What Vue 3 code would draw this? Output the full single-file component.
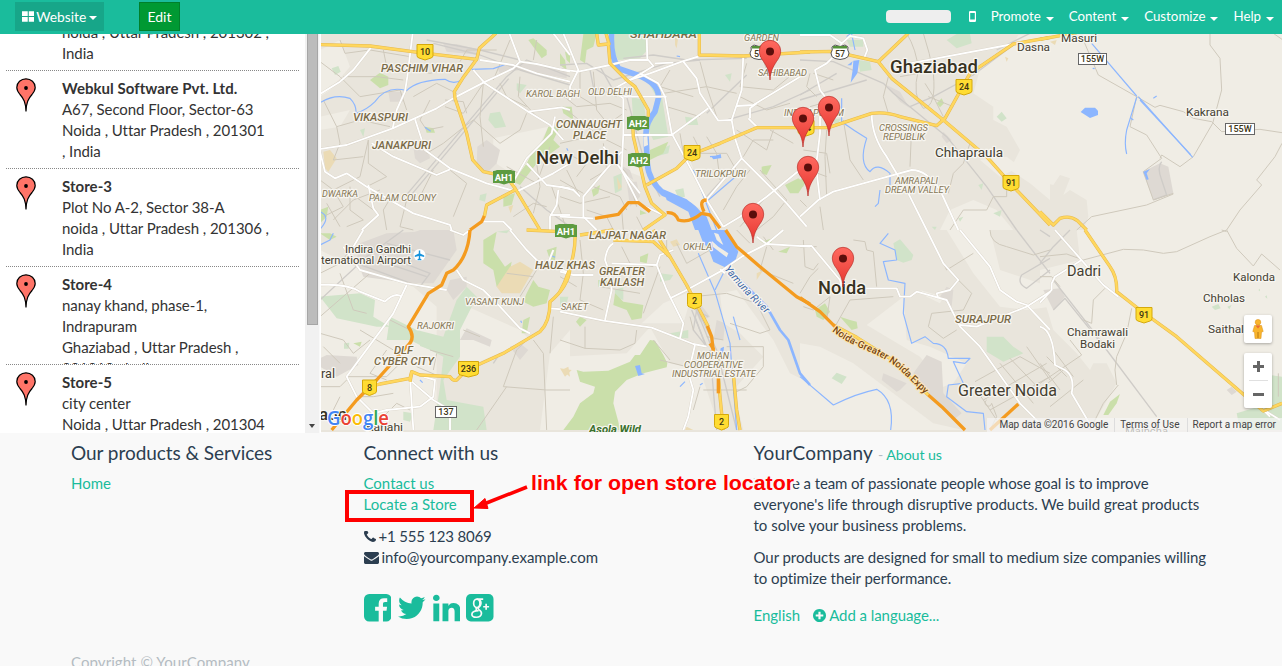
<script setup>
const menus = ['Promote', 'Content', 'Customize', 'Help']

const stores = [
  { name: 'Store-1', lines: ['Sector 62', 'noida , Uttar Pradesh , 201302 ,', 'India'] },
  { name: 'Webkul Software Pvt. Ltd.', lines: ['A67, Second Floor, Sector-63', 'Noida , Uttar Pradesh , 201301', ', India'] },
  { name: 'Store-3', lines: ['Plot No A-2, Sector 38-A', 'noida , Uttar Pradesh , 201306 ,', 'India'] },
  { name: 'Store-4', lines: ['nanay khand, phase-1,', 'Indrapuram', 'Ghaziabad , Uttar Pradesh ,', '201010 , India'] },
  { name: 'Store-5', lines: ['city center', 'Noida , Uttar Pradesh , 201304'] },
]

// Each map tile keeps its own local coordinates at three units per pixel.
const tiles = [
  {
    x: 320, y: 30,
    rural: ['M0 60L60 30 90 110 30 180 0 200Z', 'M520 325L640 300 685 290 640 380 590 440 520 395Z', 'M0 260L90 240 60 290 0 300Z'],
    built: ['M472 350L500 330 540 360 530 400 500 430 470 410Z', 'M205 185L245 185 250 215 210 215Z', 'M280 350L325 355 330 385 300 400 285 385Z', 'M370 42L410 42 480 60 480 75 380 65Z', 'M530 110L640 95 740 120 740 145 600 120 540 130Z'],
    mint: ['M35 115L55 108 62 125 45 135Z', 'M510 250L540 245 558 290 525 295 505 270Z', 'M590 160L620 165 600 190 590 180Z', 'M480 495L500 490 495 515 478 510Z', 'M120 300L135 295 130 320Z'],
    green: ['M150 150L180 128 205 140 205 165 180 175Z', 'M625 30L640 25 680 60 680 75 665 85Z', 'M685 290L720 290 700 330 720 350 650 400 600 465 580 455 620 400 635 370 665 340Z', 'M550 500L585 490 575 525 550 530Z', 'M735 65L750 70 750 100 740 90Z', 'M315 290L340 295 345 308 320 308Z', 'M0 540L25 530 20 560 0 580Z'],
    sand: ['M10 365L30 360 50 385 25 425 15 415Z', 'M565 530L580 525 572 550Z'],
    rail: ['M255 500L560 140 620 90 750 140', 'M265 505L566 146', 'M320 30L480 60 600 90', 'M340 40L480 75 600 120 750 165', 'M600 470L680 540 750 590'],
    minor: ['M0 95L60 140 120 200 240 180 260 240', 'M60 30L75 70 150 60 270 80', 'M190 60L200 110 260 120', 'M70 140L170 140 250 150', 'M10 210L50 290 120 270 210 290', 'M50 290L60 340 40 390 130 380', 'M145 330L145 400 200 440 140 470', 'M330 210L300 270 320 300 370 290', 'M280 120L330 130 410 110', 'M280 200L350 160 410 190', 'M420 300L370 340 320 370', 'M420 300L460 270 540 340 600 300 620 250', 'M490 160L480 260 490 350', 'M490 160L430 250 375 230', 'M375 210L430 215 440 250', 'M420 95L440 60 530 60', 'M600 140L595 200 650 260', 'M650 30L640 90', 'M540 160L560 200 620 230', 'M690 350L650 460 560 410', 'M650 400L660 470 640 550', 'M0 450L40 480 70 530 10 560', 'M90 470L90 540 130 570 80 590', 'M40 480L120 440 145 330', 'M220 490L190 540 200 600', 'M260 510L240 590 280 600', 'M10 490L80 480 160 540', 'M390 420L440 460 400 560', 'M340 420L300 500', 'M570 30L520 150', 'M680 530L640 520 580 560', 'M695 470L720 540 740 600', 'M40 570L100 510 180 480', 'M20 520L60 590'],
    water: ['M0 218Q45 190 90 205Q110 225 108 250Q140 240 165 215Q200 165 260 182Q290 150 375 148Q400 165 425 150', 'M455 118L520 116 560 102', 'M0 545Q35 560 0 598', 'M315 292L332 304'],
    white: ['M278 10L262 140 255 185 230 240 218 295', 'M155 50L100 120 60 155 0 192', 'M0 357L80 345 218 295 350 235 405 202 490 158 580 115 600 95 568 10', 'M480 90L580 105 650 130 750 155', 'M460 120L495 160 625 245 690 285 730 330', 'M700 10L750 75', 'M600 95L650 102 750 125', 'M625 245L725 232 750 240', 'M285 268L315 360 390 415 500 460 590 485', 'M155 340L220 380 350 435 390 418', 'M590 485L700 430 750 400', 'M590 485L580 455 620 385 695 310 705 260', 'M620 400L680 465 750 475', 'M0 365L15 425 45 445 80 430 140 470 280 550 390 585 395 600', 'M145 465L160 535 175 555 125 600', 'M715 480L710 525 690 560 690 600', 'M690 555L750 555', 'M490 575L550 575 575 600'],
    yellow: ['M0 44L150 48 300 68 470 88 478 55 528 10', 'M470 88L428 145 403 185 405 205 440 310 458 390 490 425 560 440 585 475 660 600', 'M585 480L500 525 493 560'],
    orange: ['M493 558L485 575 450 600'],
  },
  {
    x: 560, y: 30,
    rural: ['M275 460L390 390 430 500 430 540 370 510Z', 'M205 425L235 350 245 440Z'],
    built: ['M200 455L230 455 240 500 210 530Z', 'M180 405L210 420 220 450 190 430Z'],
    mint: ['M165 10H260L262 60 240 85 175 90 158 60Z', 'M250 135L305 195 325 320 280 330 260 290 290 200Z', 'M215 200L250 210 260 280 220 280Z', 'M160 440L185 430 185 480 165 490Z', 'M375 260L410 265 415 285 380 285Z', 'M345 480L370 475 375 500 355 505Z', 'M495 135L515 130 510 155Z', 'M300 360L330 345 325 370 285 380Z'],
    green: ['M70 12L110 10 100 50 80 60 75 100 60 90Z', 'M0 70L15 90 20 120 0 105Z', 'M95 480L120 465 115 490 100 500Z', 'M270 360L325 335 310 370 270 390Z', 'M675 465L715 445 735 460 715 490 690 490Z', 'M605 410L635 405 620 435 605 430Z', 'M5 230L35 230 40 270 10 250Z', 'M240 540L260 550 240 555Z'],
    sand: ['M345 20L355 20 350 55 345 45Z', 'M170 440L185 470 175 480Z'],
    rail: ['M190 85L280 75 380 90 560 85', 'M0 105L80 100 160 150 320 100 420 90', 'M440 250L560 135', 'M500 270L640 230 750 180', 'M540 390L440 500', 'M200 200L260 420 300 500', 'M90 120L100 170 170 200', 'M120 110L165 190'],
    minor: ['M0 190L50 230 150 220 200 240', 'M20 240L120 320 200 360', 'M0 340L90 320 190 250', 'M60 120L60 200 110 230', 'M100 125L110 240 150 290', 'M310 190L440 170 530 190', 'M330 120L300 170 400 200', 'M420 95L440 170 470 260', 'M560 100L540 170 640 180 700 130', 'M600 60L620 120', 'M320 230L420 260', 'M360 310L370 370 500 370 540 440', 'M440 320L470 370 480 450', 'M530 300L620 360 640 300', 'M550 380L580 330 640 330', 'M400 320L420 360', 'M600 420L680 510 640 560 590 600', 'M570 420L530 470 490 540', 'M610 510L540 590', 'M130 340L140 420 90 450', 'M40 380L80 400 50 440', 'M150 370L200 430 230 530', 'M100 470L180 500 200 540', 'M80 540L140 560 160 600', 'M185 540L190 600', 'M230 560L250 600', 'M540 200L620 240 690 220', 'M20 420L60 500', 'M0 450L70 490', 'M0 500L60 520 150 500', 'M630 300L700 340'],
    water: ['M550 420L445 510', 'M450 380L482 378', 'M350 78L360 80', 'M20 355L24 362', 'M400 420L470 600'],
    river: ['M155 10Q150 75 175 115L240 138Q300 165 295 205L285 245Q255 280 258 320L262 400Q265 450 310 490L380 520Q425 545 430 600'],
    waterArea: ['M310 478L380 508 440 560 455 600H405L385 545 320 510Z', 'M455 382L482 372 484 384 460 388Z'],
    islands: ['M250 320L262 318 264 345 252 350Z'],
    white: ['M0 118L55 125 150 105 210 90 265 90 280 108 245 130 155 180 190 205', 'M260 10L262 90', 'M10 10L55 120 30 170 30 210', 'M210 150L270 130 365 95 420 78', 'M285 100L340 98', 'M240 130L295 160 315 200 335 310 400 430 440 510 490 590', 'M190 205V310L185 420 235 520 310 555', 'M190 200L320 200', 'M190 315L335 315 445 235', 'M370 95L410 145 420 190 475 272 515 270 525 325 545 385 680 520 740 590', 'M550 75L545 180 515 270', 'M530 228L580 225 720 140', 'M570 265L570 235 590 220', 'M590 290L565 265', 'M110 600L70 560 70 500 120 440 185 365', 'M0 470L40 480 60 500', 'M130 350L240 490', 'M545 385L430 520', 'M490 590L540 560 620 500 750 395', 'M0 560L100 565'],
    yellow: ['M110 10L115 45 145 42 150 100 200 150 225 170 265 240 265 260', 'M138 10L148 45', 'M218 280L220 320 255 470 275 520 315 555 250 600', 'M260 465L350 415 390 375 480 340 590 293 750 293', 'M418 10V75L550 78 750 66'],
    orange: ['M105 565L175 553 205 518 235 518 270 545', 'M320 548Q345 545 355 570Q390 580 425 550L450 555 480 595', 'M440 510Q415 510 432 545'],
  },
  {
    x: 800, y: 30,
    rural: ['M750 10L655 15 635 50 545 100 520 190 580 230 580 270 620 290 660 360 630 420 690 460 750 510Z', 'M450 540L520 510 590 540 640 600H420Z', 'M600 440L540 390 620 380 660 410Z'],
    built: ['M260 165L300 185 320 220 330 235 300 215Z', 'M430 305L455 330 440 340 425 320Z'],
    mint: ['M440 30L470 12 510 12 515 40 470 55Z', 'M175 90L210 95 215 120 180 125Z', 'M590 260L605 245 620 265 605 275Z', 'M140 30L190 30 190 50 150 50Z', 'M95 270L125 265 110 285Z', 'M580 550L605 540 600 560Z', 'M535 465L550 460 545 480Z', 'M475 565L490 560 480 575Z', 'M395 590L410 590 405 600Z'],
    green: ['M410 220L425 205 432 220 420 232Z', 'M0 450L15 440 10 470 0 470Z'],
    sand: ['M615 80L625 85 620 95Z'],
    rail: ['M0 90L100 95 250 160 280 190 440 320 560 470 650 600', 'M640 45L520 135 400 200 330 230', 'M200 150L0 210', 'M110 130L0 195', 'M690 10L590 60'],
    minor: ['M320 10Q350 60 355 120Q335 200 370 235Q410 230 400 130Q390 70 370 10', 'M265 140L250 200 265 250', 'M375 160L400 200 430 260', 'M385 200L460 230', 'M355 130L300 140', 'M130 270L150 390 190 450', 'M335 290L330 410', 'M80 300L75 380 80 500', 'M10 360L80 370 90 430', 'M0 410L80 440', 'M510 340L490 400 460 430 445 490', 'M450 600L490 540 560 540 580 500 620 500 620 480', 'M30 130L20 170 50 200', 'M30 230L65 220 75 260', 'M0 510L20 530', 'M60 530L70 600', 'M40 130L100 150'],
    water: ['M155 12L165 60', 'M125 205L125 275Q160 300 200 325Q175 400 210 425Q230 395 270 430L270 465', 'M240 480L235 520 225 530', 'M140 20L150 12'],
    waterArea: ['M160 92L178 90 172 130 152 158 158 120Z', 'M142 106L158 94 154 106Z'],
    white: ['M0 15L90 15 125 40 150 18 190 25 202 60 190 90', 'M125 40L110 70 80 100 45 120 60 180 75 200 60 240 60 310 48 410 60 510', 'M330 100L640 42', 'M215 250Q215 320 260 380L325 490 380 600', 'M0 560L55 510 100 485 190 460 335 420 Q380 420 420 480L475 600'],
    yellow: ['M0 66L100 64 235 95 325 10', 'M235 95L275 145 430 270 560 380 640 470 750 585', 'M0 293H85L215 250Q260 245 300 260L410 287 435 265 510 130 640 42 750 22'],
    orange: [],
  },
  {
    x: 1040, y: 0,
    rural: ['M0 100H726V690H130L145 650 140 600 90 570 70 585 90 535 60 525 40 555 0 545Z'],
    built: ['M308 515L360 490 385 500 400 580 340 600 325 560Z'],
    mint: [], green: [], sand: ['M30 125L50 120 45 135Z'],
    rail: ['M365 485Q350 500 365 540L380 585 340 600'],
    minor: ['M510 100V135L540 175 545 270 518 370 460 470 420 500 365 465 360 475', 'M130 120L175 225 290 290 270 380 320 405 365 475 310 515 340 600 400 580', 'M290 290L345 322 360 316 430 335 460 355 515 365 545 395 660 388 726 398', 'M110 690L155 650 320 615 400 582', 'M560 690L600 630 665 555 650 540 705 470 726 430', 'M700 100L726 118'],
    water: ['M155 130L290 288', 'M295 290L458 472', 'M300 300L452 464', 'M290 292L260 390Q252 430 260 462', 'M272 354L280 360', 'M340 295L350 288', 'M158 205L164 206'],
    waterArea: ['M122 336L135 323H165L174 332V345L150 354Z', 'M310 515L330 507 320 520 326 538 320 540Z'],
    white: [],
    yellow: ['M0 118L110 98', 'M0 635L40 675 60 655 Q90 645 112 662L140 690'],
    orange: [],
  },
  {
    x: 320, y: 230,
    rural: ['M0 60L80 100 280 170 350 230 350 600H0Z', 'M420 220L600 300 630 330 420 420Z', 'M690 370L750 300 750 600H660Z'],
    built: ['M120 40L200 10 400 0 410 60 340 160 270 160 130 140 110 90Z', 'M390 150L440 140 440 170 400 210 380 180Z', 'M0 385L20 375 110 380 115 405 50 440 0 410Z', 'M440 295L515 330 510 350 460 330 420 330Z', 'M570 350L600 340 625 360 600 390Z', 'M200 40L300 0 390 0 380 60 300 140 260 140Z'],
    mint: ['M0 200L120 190 165 210 160 260 210 290 170 290 50 265Z', 'M210 260L290 300 370 320 410 210 440 170 470 200 440 260 420 300 420 380 370 450 380 510 490 530 500 600H340L360 470 370 380 270 330 200 330Z', 'M300 340L328 350 325 357 300 348Z', 'M72 340L88 338 86 356 72 356Z', 'M530 5L570 0 560 10Z', 'M250 545L280 550 270 575 250 570Z'],
    green: ['M490 30L530 5 520 60 555 110 575 95 560 180 530 170 520 120 490 100Z', 'M655 170L690 180 680 220 640 230 610 215 620 190 640 150Z', 'M610 270L630 260 620 310 605 310Z', 'M680 60L710 50 705 90 690 90Z', 'M0 10L30 10 50 20 30 30Z', 'M100 340L125 335 120 350Z'],
    sand: ['M570 110L600 95 640 120 600 190 545 190 530 170Z', 'M725 420L745 410 750 440Z'],
    rail: ['M0 210L140 80 250 0', 'M520 400L540 370', 'M110 100L300 170 330 130 200 80', 'M170 90L320 140', 'M200 40L390 90'],
    minor: ['M60 130L100 240 140 250', 'M0 260L150 130', 'M0 310L70 330 100 370 150 330', 'M210 270L270 300', 'M120 300L220 360', 'M80 440L200 440 240 400', 'M0 470L60 470 80 450', 'M220 490L160 500 110 500', 'M190 560L230 520 270 540', 'M550 470L590 360 620 330', 'M550 470L680 480 750 480', 'M640 330L670 370 680 600', 'M470 600L560 470', 'M350 370L340 420', 'M430 300L480 320', 'M600 200L650 120 680 90', 'M560 130L640 140', 'M700 260L690 370', 'M120 20L60 100 0 130', 'M10 350L60 400', 'M60 500L30 560', 'M200 360L150 430 200 450', 'M290 410L360 440', 'M330 360L400 380'],
    water: ['M0 45L30 30 40 10', 'M690 75L705 82', 'M605 278L602 272', 'M300 450L308 458'],
    white: ['M0 165Q80 160 120 185L195 215Q225 185 245 200', 'M70 50L120 120 260 160 380 180', 'M390 0L430 15 450 0', 'M410 120L430 150 490 180 540 230 600 295 630 310', 'M570 0L620 60 650 90 750 130', 'M700 60L680 110', 'M260 165L220 250 80 440 110 500 160 550 200 540 300 530 340 500 345 450 310 440', 'M270 440L280 600', 'M275 455L340 510 390 540 390 600', 'M690 235L750 240', 'M130 0L100 50'],
    yellow: ['M150 470L180 462 270 445 275 425 300 435 390 440 Q400 455 410 450L440 420 550 370 660 305Q690 275 690 215Q745 170 750 115', 'M270 455L275 430', 'M620 0L720 5'],
    orange: ['M450 0Q445 80 400 120L380 130 365 165 325 190 265 290Q290 325 260 350L170 450 110 510 35 600'],
  },
  {
    x: 560, y: 230,
    rural: ['M245 280L310 220 400 180 370 280Z', 'M480 190L530 180 610 290 640 330 690 430 750 460V600H550L520 480 610 380 540 310 490 280Z', 'M0 380L200 370 270 290 330 400 420 420 480 600H0Z'],
    built: ['M470 270L495 280 490 330 460 330Z', 'M420 220L450 260 420 275 405 240Z'],
    mint: ['M330 310L385 300 385 325 350 325Z', 'M300 130L340 135 330 150 300 155Z', 'M0 200L25 200 15 240 0 240Z', 'M165 180L190 170 190 210 165 200Z'],
    green: ['M165 190L190 215 250 225 245 265 215 270 200 240 160 225Z', 'M50 420L70 425 145 422 210 395 225 375 240 375 270 330 285 332 310 375 322 400 320 412 250 430 200 450 165 485 160 520 175 575 180 600H10L40 560 60 520 100 490 105 470 60 455Z', 'M60 260L80 270 60 290 48 275Z', 'M115 150L140 150 140 170 115 170Z', 'M240 80L265 70 260 100 240 95Z', 'M655 65L690 50 680 70Z', 'M600 35L640 25 630 45Z'],
    sand: ['M0 415L35 420 15 440Z', 'M330 35L350 28 360 45 340 50Z', 'M590 130L610 120 590 150Z', 'M380 590L400 600H375Z'],
    rail: ['M320 60L380 170 430 290 450 340', 'M370 150L470 360 530 600', 'M395 240L440 350', 'M410 240L400 300 440 350', 'M405 260L438 350', 'M415 240L450 310', 'M425 250L445 260', 'M450 360L470 600'],
    minor: ['M0 330L75 355 180 360 225 340 230 300', 'M75 290V355', 'M60 30L70 130', 'M185 50L210 100 280 110', 'M250 250L300 110', 'M350 40L380 100 450 60', 'M320 30L320 80', 'M400 200L500 190 590 220 630 300 600 310 510 280', 'M500 350L610 350 610 410 560 470 520 490', 'M390 260L400 300', 'M300 390L380 410', 'M420 470L400 540', 'M430 480L560 480', 'M440 320L490 330', 'M620 50L600 120 700 160', 'M280 330L330 390', 'M120 170L240 190', 'M70 130L60 210 130 240', 'M570 40L530 0', 'M640 60L610 20', 'M0 140L50 170'],
    water: ['M415 70L465 185 510 340 530 600', 'M540 330L520 260', 'M360 470L375 455', 'M420 465L428 460', 'M490 130L465 180'],
    waterArea: ['M415 0L430 40 445 55 460 95 495 112 525 95 535 65 520 35 495 0Z', 'M225 408L240 405 245 430 255 432 235 438Z', 'M482 355L492 350 490 370 480 368Z'],
    islands: ['M462 8L475 12 490 45 482 40 470 30Z', 'M455 32L475 50 505 70 500 82 478 65 458 50Z'],
    river: [],
    channel: ['M500 110L620 230 660 300 685 330 720 430 750 465'],
    white: ['M160 40Q140 50 135 90L150 130 155 180 135 270', 'M0 245L130 272 275 293 400 342 440 350', 'M155 100L290 105 320 180 370 280 360 325', 'M290 105L300 75 340 60', 'M330 205L380 180 480 125 545 80 620 42 670 0', 'M480 118L495 130', 'M620 42L750 50', 'M590 20L620 42', 'M405 345L385 430 400 480 385 560 370 600', 'M0 125L40 135 100 135'],
    yellow: ['M45 0Q50 90 0 185', 'M60 15L160 0', 'M160 30L280 35 330 80 380 165 445 290', 'M280 0L330 80', 'M470 370L480 500 490 600', 'M480 400L520 430 530 540 540 600'],
    orange: ['M442 288L455 320 460 365', 'M475 445V490', 'M450 340L462 360', 'M497 0L530 50 600 110 710 200 750 222'],
  },
  {
    x: 800, y: 230,
    rural: ['M0 340L60 350 160 400 400 580 490 600H0Z', 'M200 285L310 200 320 330 390 350 500 400 460 460 430 470 360 380Z', 'M440 0H570L600 120 750 170 750 230 680 240 600 230 520 130Z', 'M360 180L430 200 420 220 380 200Z'],
    built: ['M340 430L380 375 425 395 430 490 485 550 460 570 380 490Z', 'M250 430L320 460 300 480 290 485 245 450Z', 'M440 170L460 180 455 230 420 200Z'],
    mint: ['M560 320L610 320 640 350 670 370 610 395 560 365Z', 'M280 40L300 28 340 75 335 90 310 98 290 90Z', 'M95 445L110 428 140 440 125 462Z'],
    green: ['M45 240L75 220 90 245 70 270 50 260Z', 'M120 260L150 270 170 275 173 295 155 300Z'],
    sand: ['M160 320L180 325 170 345Z'],
    rail: ['M650 0L750 130', 'M750 85L665 135Q650 160 680 175L750 120'],
    minor: ['M160 30L195 35 200 60 220 65 230 170', 'M105 290L150 210 280 200', 'M10 30L15 110 40 120 55 100', 'M0 190L30 140 55 115', 'M520 70L440 120 430 100', 'M470 145L515 190 490 240 395 250 385 290 430 325 470 300', 'M525 455L660 380 750 430', 'M550 510L740 400', 'M570 540L750 440', 'M600 400L700 520', 'M630 385L740 500', 'M680 350L750 450', 'M520 470L550 510 590 570', 'M560 510A10 10 0 1 0 575 520L590 560 570 600', 'M570 0Q570 40 620 50L700 75 750 60', 'M0 50L50 50', 'M10 230L40 240 90 200 80 270'],
    water: ['M0 440L100 525Q170 490 230 478Q285 510 272 600', 'M265 10L240 40 285 60 290 90 250 95 265 150 315 160 310 250 335 340 375 320 400 340Q440 340 445 385L510 385 495 400 460 395 490 460 445 465 440 500 500 545 550 550 555 600'],
    white: ['M380 0L430 100 475 150 450 180 410 190 415 205', 'M0 48L35 48 120 150 125 175 290 175 300 200 330 200 350 185 440 210 480 290 540 350 660 520 720 580', 'M480 0L570 110 600 180 650 215 680 225 750 300', 'M480 285L530 290 680 230 750 185'],
    yellow: ['M100 285L170 322 270 385 385 495'],
    orange: ['M0 203L60 245 105 290', 'M385 495L425 530 495 600', 'M570 600L655 522'],
  },
  {
    x: 1040, y: 230,
    rural: ['M110 0H726V600H150L230 460 200 400 160 400 150 420 110 370 40 300 10 200 0 190V120L120 90Z'],
    built: ['M10 180L60 175 75 200 40 240Z', 'M560 480L575 470 590 485 575 495Z'],
    mint: ['M590 550L690 520 690 435 726 440V600H600Z', 'M515 230L535 222 542 235 525 240Z', 'M562 230L575 225 568 238Z', 'M675 200L680 196 682 206Z', 'M655 180L660 176 660 184Z'],
    green: ['M190 555L210 515 240 492 230 520 205 555Z'],
    sand: [],
    rail: ['M0 100L40 50 90 0', 'M40 240L75 205 200 360 350 560', 'M40 150L200 355', 'M0 0L30 20'],
    minor: ['M0 80L80 72 130 90 250 58 310 60 370 70 410 65 510 20 560 0 590 55 640 108 665 72 720 120', 'M545 0L560 5', 'M195 175L160 210 155 280 130 270', 'M275 235L260 310 230 380 225 420 230 465', 'M0 140L35 140 60 170', 'M90 330L125 375 0 460', 'M0 400L60 480', 'M20 380L80 440', 'M40 360L100 440', 'M0 480L70 420', 'M30 530L130 450', 'M150 600L190 520 235 465', 'M715 430V500'],
    water: [],
    white: ['M45 0L120 85 190 165 235 200', 'M125 90L45 140 35 160 35 180 0 218', 'M0 290Q40 300 45 405L75 420Q105 440 95 490L160 600', 'M680 545L720 570', 'M660 530L690 560'],
    yellow: ['M135 0L210 110Q232 140 230 185L300 240 410 320 610 493 670 543 726 520'],
    orange: [],
  },
]

// Paint order: fills first, then roads from the narrowest up.
const layers = [
  { key: 'rural', passes: ['fill-rural'] },
  { key: 'built', passes: ['fill-built'] },
  { key: 'mint', passes: ['fill-mint'] },
  { key: 'green', passes: ['fill-green'] },
  { key: 'sand', passes: ['fill-sand'] },
  { key: 'rail', passes: ['rail'] },
  { key: 'minor', passes: ['minor'] },
  { key: 'water', passes: ['water'] },
  { key: 'channel', passes: ['channel'] },
  { key: 'river', passes: ['river'] },
  { key: 'waterArea', passes: ['fill-water'] },
  { key: 'islands', passes: ['fill-island'] },
  { key: 'white', passes: ['white-case', 'white'] },
  { key: 'yellow', passes: ['yellow-case', 'yellow'] },
  { key: 'orange', passes: ['orange'] },
]
const passes = layers.flatMap((l) => l.passes.map((cls) => ({ key: l.key, cls })))

// text, left, baseline, width, font size, class
const labels = [
  ['PASCHIM VIHAR', 381, 72, 82, 11.5, 'area'], ['VIKASPURI', 353, 121, 55, 11.5, 'area'],
  ['JANAKPURI', 372, 149, 59, 11.5, 'area'], ['DWARKA', 322, 197, 36, 9.5, 'small'],
  ['PALAM COLONY', 369, 201, 67, 9.5, 'small'], ['KAROL BAGH', 526, 97, 54, 9.5, 'small'],
  ['OLD DELHI', 588, 94.5, 44, 9.5, 'small'], ['CONNAUGHT', 556, 128, 66, 11, 'area'],
  ['PLACE', 573, 139, 33, 11, 'area'], ['New Delhi', 536, 164, 83, 18, 'city'],
  ['SHAHDARA', 630, 38, 67, 11.5, 'area'], ['GARDEN', 744, 41, 35, 9.5, 'small'],
  ['SAHIBABAD', 758, 76, 49, 9, 'small'], ['TRILOKPURI', 695, 177, 51, 9.5, 'small'],
  ['INDIRAPURAM', 784, 116, 60, 9.5, 'small'], ['Ghaziabad', 890, 73, 88, 18, 'city'],
  ['Dasna', 1017, 51, 33, 11.5, 'town'], ['Masuri', 1061, 42, 36, 11.5, 'town'],
  ['Kakrana', 1186, 116, 43, 11.5, 'town'], ['CROSSINGS', 879, 131, 49, 9.5, 'small'],
  ['REPUBLIK', 883, 140, 42, 9.5, 'small'], ['Chhapraula', 935, 157, 68, 12.5, 'town'],
  ['AMRAPALI', 895, 184, 43, 9.5, 'small'], ['DREAM VALLEY', 885, 193, 64, 9.5, 'small'],
  ['Indira Gandhi', 345, 253, 66, 11, 'town'], ['ternational Airport', 321, 264, 90, 11, 'town'],
  ['VASANT KUNJ', 465, 305, 59, 9.5, 'small'], ['RAJOKRI', 417, 329, 37, 9.5, 'small'],
  ['DLF', 394, 354, 19, 11, 'area'], ['CYBER CITY', 374, 365, 60, 11, 'area'],
  ['ral', 321, 378, 14, 12, 'town'], ['aon', 319, 420, 28, 17, 'city'], ['Kanahi', 366, 431, 37, 11.5, 'town'],
  ['HAUZ KHAS', 535, 269, 60, 11.5, 'area'], ['LAJPAT NAGAR', 589, 239, 77, 11.5, 'area'],
  ['OKHLA', 683, 250, 29, 9.5, 'small'], ['GREATER', 599, 275, 46, 11.5, 'area'],
  ['KAILASH', 600, 286, 44, 11.5, 'area'], ['SAKET', 561, 310, 27, 9.5, 'small'],
  ['MOHAN', 697, 359, 32, 9.5, 'small'], ['COOPERATIVE', 684, 368, 59, 9.5, 'small'],
  ['INDUSTRIAL ESTATE', 672, 377, 84, 9.5, 'small'], ['Asola Wild', 589, 433, 52, 11, 'park'],
  ['Noida', 818, 294, 48, 18, 'city'], ['SURAJPUR', 955, 323, 56, 11.5, 'area'],
  ['Greater Noida', 958, 396, 99, 16.5, 'bigtown'], ['Dadri', 1067, 276, 34, 14, 'town'],
  ['Chamrawali', 1067, 336, 61, 11.5, 'town'], ['Bodaki', 1080, 348, 35, 11.5, 'town'],
  ['Kalonda', 1233, 281, 42, 11.5, 'town'], ['Chholas', 1203, 302, 42, 11.5, 'town'],
  ['Saithal', 1208, 333, 36, 11.5, 'town'], ['Maincha', 1125, 435, 43, 11.5, 'town'],
]

const shields = [
  ['10', 425, 52, 16], ['24', 692, 153, 16], ['24', 964, 87, 16], ['24', 806, 128, 16], ['91', 1011, 183, 16],
  ['91', 1144, 315, 16], ['8', 369.5, 387.5, 14], ['236', 468.5, 369, 20], ['2', 694.5, 301, 14], ['2', 721.5, 422, 14],
]
const highways = [['AH1', 504, 177], ['AH2', 638, 123], ['AH2', 639, 160], ['AH1', 566, 231]]
const boxes = [['155W', 1092.5, 59, 28], ['155W', 1240, 129, 29], ['137', 446, 412, 21]]
const usShields = [['57', 840, 53], ['57', 759, 53]]
const pins = [[770, 80], [829, 136], [803, 147], [808, 196], [753, 243], [843, 287]]

const social = [
  { name: 'facebook', box: '128 128 1536 1536', d: 'M1376 128q119 0 203.5 84.5t84.5 203.5v960q0 119-84.5 203.5t-203.5 84.5h-188v-595h199l30-232h-229v-148q0-56 23.5-84t91.5-28l122-1v-207q-63-9-178-9-136 0-217.5 80t-81.5 226v171h-200v232h200v595h-532q-119 0-203.5-84.5t-84.5-203.5v-960q0-119 84.5-203.5t203.5-84.5h960z' },
  { name: 'twitter', box: '108 128 1576 1536', d: 'M1684 408q-67 98-162 167 1 14 1 42 0 130-38 259.5t-115.5 248.5-184.5 210.5-258 146-323 54.5q-271 0-496-145 35 4 78 4 225 0 401-138-105-2-188-64.5t-114-159.5q33 5 61 5 43 0 85-11-112-23-185.5-111.5t-73.5-205.5v-4q68 38 146 41-66-44-105-115t-39-154q0-88 44-163 121 149 294.5 238.5t371.5 99.5q-8-38-8-74 0-134 94.5-228.5t228.5-94.5q140 0 236 102 109-21 205-78-37 115-142 178 93-10 186-50z' },
  { name: 'linkedin', box: '128 100 1536 1536', d: 'M477 625v991h-330v-991h330zm21-306q1 73-50.5 122t-135.5 49h-2q-82 0-132-49t-50-122q0-74 51.5-122.5t134.5-48.5 133 48.5 51 122.5zm1166 729v568h-329v-530q0-105-40.5-164.5t-126.5-59.5q-63 0-105.5 34.5t-63.5 85.5q-11 30-11 81v553h-329q2-399 2-647t-1-296l-1-48h329v144h-2q20-32 41-56t56.5-52 87-43.5 114.5-15.5q171 0 275 113.5t104 332.5z' },
]
</script>

<template>
  <div class="page">
    <header class="topbar">
      <button class="website">
        <svg class="grid-icon" viewBox="0 0 12 10"><path d="M0 0h5.5v4.5H0zM6.5 0H12v4.5H6.5zM0 5.500h5.500V10H0zM6.500 5.500H12V10H6.500z" /></svg>
        <span>Website</span><i class="caret"></i>
      </button>
      <button class="edit">Edit</button>
      <div class="spacer"></div>
      <span class="switch"></span>
      <svg class="mobile" viewBox="0 0 7 11"><path fill-rule="evenodd" d="M1.2 0h4.6Q7 0 7 1.2v8.6Q7 11 5.8 11H1.2Q0 11 0 9.800V1.200Q0 0 1.200 0zM1.200 2v6.500h4.600V2z" /></svg>
      <nav class="menus">
        <a v-for="m in menus" :key="m">{{ m }}<i class="caret"></i></a>
      </nav>
    </header>

    <main class="locator">
      <div class="stores">
        <ul class="list">
          <li v-for="s in stores" :key="s.name" class="store">
            <svg class="pin" viewBox="0 0 20 34">
              <path d="M10 33.500C9.800 24 7.500 20.500 4 16.500C2 14 .8 12 .8 9.500C.8 4.500 5 .8 10 .8S19.200 4.500 19.200 9.500C19.200 12 18 14 16 16.500C12.500 20.500 10.200 24 10 33.500Z" />
              <circle cx="10" cy="10" r="1.900" />
            </svg>
            <div class="info">
              <strong>{{ s.name }}</strong>
              <span v-for="l in s.lines" :key="l">{{ l }}</span>
            </div>
          </li>
        </ul>
        <div class="scroll"><div class="thumb"></div><i class="down"></i></div>
      </div>

      <div class="map">
        <svg class="canvas" viewBox="321 34 961 398" width="961" height="398">
          <defs>
            <linearGradient id="pinfill" x1="0" y1="0" x2="0" y2="1">
              <stop offset="0" stop-color="#ff6a60" /><stop offset="1" stop-color="#e5352f" />
            </linearGradient>
            <path id="river-line" d="M724 269Q740 290 769 317" />
            <path id="expy-line" d="M832 331Q845 342 868 351Q893 362 904 374L932 401" />
          </defs>
          <g v-for="p in passes" :key="p.cls" :class="p.cls">
            <g v-for="t in tiles" :key="t.x + '-' + t.y" :transform="`translate(${t.x} ${t.y}) scale(.33333)`">
              <path v-for="d in t[p.key] || []" :key="d" :d="d" />
            </g>
          </g>

          <g v-for="s in shields" :key="s[1]" class="shield">
            <path :d="`M${s[1] - s[3] / 2} ${s[2] - 7.500}h${s[3]}v11q0 2-2 2.500l-${s[3] / 2 - 2} 2-${s[3] / 2 - 2}-2q-2-.5-2-2.500z`" />
            <text :x="s[1]" :y="s[2] + 3">{{ s[0] }}</text>
          </g>
          <g v-for="h in highways" :key="h[1]" class="highway">
            <path :d="`M${h[1] - 11} ${h[2] - 6}q2 0 4-1h14q2 1 4 1v12h-6l-5 1.500-5-1.500h-6z`" />
            <text :x="h[1]" :y="h[2] + 4">{{ h[0] }}</text>
          </g>
          <g v-for="u in usShields" :key="u[1]" class="us">
            <path :d="`M${u[1] - 8} ${u[2] - 6}l3-2 5 1.500 5-1.500 3 2q-1 3 1 6 0 4.500-4 5.500l-5 1-5-1q-4-1-4-5.500 2-3 1-6z`" />
            <rect :x="u[1] - 7" :y="u[2] - 7" width="14" height="2.500" />
            <text :x="u[1]" :y="u[2] + 4">{{ u[0] }}</text>
          </g>
          <g v-for="b in boxes" :key="b[1]" class="box">
            <rect :x="b[1] - b[3] / 2" :y="b[2] - 5.500" :width="b[3]" height="11" />
            <text :x="b[1]" :y="b[2] + 3.400">{{ b[0] }}</text>
          </g>

          <text
            v-for="l in labels" :key="l[0] + l[1]" :class="['label', l[5]]"
            :x="l[1]" :y="l[2]" :font-size="l[4]" :textLength="l[3]" lengthAdjust="spacingAndGlyphs"
          >{{ l[0] }}</text>
          <text class="label river-name" font-size="10.4"><textPath href="#river-line">Yamuna River</textPath></text>
          <text class="label expy-name" font-size="9.8"><textPath href="#expy-line">Noida-Greater Noida Expy</textPath></text>

          <g class="airport">
            <circle cx="419.500" cy="255" r="6" />
            <path d="M418.800 250.500h1.400v3l4 2v1.400l-4-.8v2.400l1.300 1v.8h-4v-.8l1.300-1v-2.400l-4 .8v-1.400l4-2z" />
          </g>

          <g v-for="m in pins" :key="m[0]" class="marker" :transform="`translate(${m[0]} ${m[1]})`">
            <path d="M0 0C-.6-9-3-13-6.500-18.500C-9-22-10.700-25-10.700-29A10.700 10.700 0 0 1 10.700-29C10.700-25 9-22 6.500-18.500C3-13 .6-9 0 0Z" />
            <circle cx="0" cy="-28.500" r="4" />
          </g>
          <text class="google" x="327" y="424.500" textLength="62" lengthAdjust="spacingAndGlyphs"><tspan class="b">G</tspan><tspan class="r">o</tspan><tspan class="y">o</tspan><tspan class="b">g</tspan><tspan class="g">l</tspan><tspan class="r">e</tspan></text>
        </svg>

        <div class="controls">
          <div class="pegman">
            <svg viewBox="0 0 12 20"><circle cx="6" cy="3.200" r="2.800" /><path d="M2.500 6.500h7l1.700 6-1.700.5-.5 6.500h-6L2.500 13l-1.700-.5z" /><path class="tie" d="M3.500 6.500h5L6 9.500z" /><path class="leg" d="M6 13v6" /></svg>
          </div>
          <div class="zoom"><button aria-label="Zoom in"><i class="bar"></i><i class="bar upright"></i></button><hr><button aria-label="Zoom out"><i class="bar"></i></button></div>
        </div>
        <div class="credits"><span>Map data ©2016 Google</span><span>Terms of Use</span><span>Report a map error</span></div>
      </div>
    </main>

    <footer class="footer">
      <section class="products">
        <h4>Our products &amp; Services</h4>
        <a>Home</a>
      </section>
      <section class="connect">
        <h4>Connect with us</h4>
        <a>Contact us</a>
        <a class="locate">Locate a Store</a>
        <div class="contact">
          <span><svg class="phone" viewBox="192 256 1408 1408"><path d="M1600 1240q0 27-10 70.5t-21 68.5q-21 50-122 106-94 51-186 51-27 0-53-3.5t-57.5-12.5-47-14.5-55.5-20.5-49-18q-98-35-175-83-127-79-264-216t-216-264q-48-77-83-175-3-9-18-49t-20.5-55.5-14.5-47-12.5-57.5-3.5-53q0-92 51-186 56-101 106-122 25-11 68.5-21t70.5-10q14 0 21 3 18 6 53 76 11 19 30 54t35 63.5 31 53.5q3 4 17.5 25t21.5 35.5 7 28.5q0 20-28.5 50t-62 55-62 53-28.5 46q0 9 5 22.5t8.5 20.5 14 24 11.5 19q76 137 174 235t235 174q2 1 19 11.5t24 14 20.5 8.5 22.5 5q18 0 46-28.5t53-62 55-62 50-28.5q14 0 28.5 7t35.5 21.5 25 17.5q25 15 53.5 31t63.5 35 54 30q70 35 76 53 3 7 3 21z" /></svg><b class="tel">+1 555 123 8069</b></span>
          <span><svg class="mail" viewBox="0 256 1792 1408"><path d="M1792 710v794q0 66-47 113t-113 47h-1472q-66 0-113-47t-47-113v-794q44 49 101 87 362 246 497 345 57 42 92.5 65.5t94.5 48 110 24.5h2q51 0 110-24.5t94.5-48 92.5-65.5q170-123 498-345 57-39 100-87zm0-294q0 79-49 151t-122 123q-376 261-468 325-10 7-42.5 31t-54 38.5-52 32.5-57.5 27-50 9h-2q-23 0-50-9t-57.5-27-52-32.5-54-38.5-42.5-31q-91-64-262-182.5t-205-142.5q-62-42-117-115.5t-55-136.5q0-78 41.5-130t118.5-52h1472q65 0 112.5 47t47.5 113z" /></svg>info@yourcompany.example.com</span>
        </div>
        <div class="social">
          <svg v-for="s in social" :key="s.name" :viewBox="s.box"><path :d="s.d" /></svg>
          <svg class="gplus" viewBox="0 0 28 28"><rect width="28" height="28" rx="5" /><ellipse cx="11" cy="9.500" rx="3.200" ry="4.300" /><path d="M11 5.200h6.500M13 5.300q2.500 1.500 2.200 4.500-.2 2-2 3.500-1.700 1.300 0 2.600 3 2 2.500 4.300-.8 3.600-5.200 3.500-4.500-.2-4.500-3.200.3-3.300 6.800-3.500M11 13.800q-1.500 1.400.2 3M20.500 10v6M17.500 13h6" /></svg>
        </div>
      </section>
      <section class="about">
        <h4><span class="brand">YourCompany</span> <small>- <a>About us</a></small></h4>
        <p><span class="tight">We are a team of passionate people whose goal is to improve</span> everyone's life through disruptive products. We build great products to solve your business problems.</p>
        <p class="snug">Our products are designed for small to medium size companies willing to optimize their performance.</p>
        <div class="langs">
          <a>English</a>
          <a class="snug"><svg viewBox="128 128 1536 1536"><path d="M1344 960v-128q0-26-19-45t-45-19h-256v-256q0-26-19-45t-45-19h-128q-26 0-45 19t-19 45v256h-256q-26 0-45 19t-19 45v128q0 26 19 45t45 19h256v256q0 26 19 45t45 19h128q26 0 45-19t19-45v-256h256q26 0 45-19t19-45zm320-64q0 209-103 385.500t-279.500 279.500-385.500 103-385.500-103-279.500-279.500-103-385.500 103-385.500 279.500-279.500 385.500-103 385.500 103 279.500 279.500 103 385.500z" /></svg>Add a language...</a>
        </div>
      </section>
      <div class="copyright">Copyright © YourCompany</div>
    </footer>

    <svg class="callout" viewBox="340 465 470 65" width="470" height="65">
      <rect x="347" y="492" width="125" height="28" />
      <path class="shaft" d="M527 487L484 504" />
      <path class="head" d="M474 508L485 498.500 488 508.500Z" />
      <text x="531" y="490" textLength="263" lengthAdjust="spacingAndGlyphs">link for open store locator</text>
    </svg>
  </div>
</template>

<style>
body { background: #f9f9f9; overflow: hidden; }
</style>

<style scoped>
.page { position: relative; width: 1282px; height: 666px; overflow: hidden; display: flex; flex-direction: column; font: 15px/21px Lato, sans-serif; color: #333; background: #f9f9f9; }
button { font: inherit; border: 0; padding: 0; margin: 0; background: none; }
.topbar { flex: none; height: 34px; box-sizing: border-box; background: #1abc9c; display: flex; align-items: center; padding: 0 8px 2px 15px; color: #fff; font-size: 14px; }
.website { width: 89px; height: 29px; background: #17a689; color: #fff; display: flex; align-items: center; justify-content: center; font-size: 13.800px; }
.grid-icon { width: 12.500px; height: 11px; fill: #fff; margin-right: 2px; }
.caret { display: inline-block; border: 4px solid transparent; border-top-color: currentColor; border-bottom: 0; margin-left: 3px; vertical-align: 1px; }
.website .caret { margin-top: 3px; }
.edit { width: 41px; height: 29px; margin-left: 35px; background: #093; border: 1px solid #00802b; color: #fff; font-size: 14px; }
.spacer { flex: 1; }
.switch { width: 65px; height: 13px; border-radius: 4px; background: #eee; }
.mobile { width: 7px; height: 11px; fill: #fff; margin: 0 15px 0 18px; }
.menus { display: flex; gap: 15px; font-size: 13.300px; }
.menus .caret { margin-left: 5px; vertical-align: 0; }
.locator { flex: none; height: 399px; display: flex; background: #f9f9f9; }
.stores { width: 321px; height: 399px; display: flex; overflow: hidden; background: #fff; }
.list { list-style: none; margin: -61px 6px 0; padding: 0; width: 293px; height: 490px; flex: none; }
.store { height: 98px; box-sizing: border-box; padding-top: 7px; border-bottom: 1px dotted #888; overflow: hidden; display: flex; }
.store:last-child { border: 0; }
.pin { width: 20px; height: 34px; margin: 0 26.500px 0 9.500px; flex: none; }
.pin path { fill: #ff7468; stroke: #000; stroke-width: 1.200; }
.info { display: flex; flex-direction: column; white-space: nowrap; }
.info > * { flex: none; }
.info span { letter-spacing: -.06px; }
.info strong { letter-spacing: .05px; }
.scroll { width: 15px; height: 399px; background: #f1f1f1; display: flex; flex-direction: column; justify-content: space-between; align-items: center; padding-bottom: 5px; box-sizing: border-box; border-right: 1px solid #f9f9f9; }
.thumb { width: 11px; height: 291px; background: #bcbcbc; border: 1px solid #a6a6a6; border-top: 0; box-sizing: border-box; }
.down { border: 3.500px solid transparent; border-top: 4px solid #444; border-bottom: 0; }
.map { position: relative; width: 961px; height: 398px; background: #e9e5dc; overflow: hidden; }
.canvas { display: block; font-family: Roboto, sans-serif; }
.canvas path { stroke-linejoin: round; stroke-linecap: butt; }
.fill-rural, .fill-island { fill: #f0ede5; }
.fill-built { fill: #ded9d3; }
.fill-mint { fill: #d1e3c9; }
.fill-green { fill: #cadfaa; }
.fill-sand { fill: #ebdbb5; }
.fill-water { fill: #8cb6ff; }
.rail { fill: none; stroke: #cfccc8; stroke-width: 4; }
.minor { fill: none; stroke: #cfc9bc; stroke-width: 3; }
.water { fill: none; stroke: #8cb6ff; stroke-width: 3.500; }
.channel { fill: none; stroke: #8cb6ff; stroke-width: 8; }
.river { fill: none; stroke: #8cb6ff; stroke-width: 17; }
.white-case { fill: none; stroke: #d8d2c6; stroke-width: 7.500; }
.white { fill: none; stroke: #fff; stroke-width: 5.500; }
.yellow-case { fill: none; stroke: #e5b94f; stroke-width: 10; }
.yellow { fill: none; stroke: #ffd75e; stroke-width: 7; }
.orange { fill: none; stroke: #f49b1f; stroke-width: 10; }
.label { paint-order: stroke; stroke: #f7f5f0; stroke-width: 2.500px; stroke-linejoin: round; fill: #443e30; }
.area { font-style: italic; font-weight: 500; fill: #7a6b48; }
.small { font-style: italic; font-weight: 400; fill: #857654; }
.city { font-weight: 500; fill: #37321f; }
.park { font-style: italic; font-weight: 700; fill: #39702c; }
.river-name { fill: #3c67a8; font-style: italic; }
.expy-name { fill: #764513; font-weight: 500; stroke: #ffe5b0; stroke-width: 2px; }
.shield path { fill: #ffdc32; stroke: #d5a90c; stroke-width: 1; }
.shield text, .us text, .box text { text-anchor: middle; font-size: 9px; font-weight: 500; fill: #3c3515; }
.highway path { fill: #5d9b40; }
.highway text { text-anchor: middle; font-size: 9.500px; font-weight: 700; fill: #fff; }
.us path { fill: #fff; stroke: #555; stroke-width: 1; }
.us rect { fill: #559239; }
.box rect { fill: #fff; stroke: #666; stroke-width: 1; }
.airport circle { fill: #fff; }
.airport path { fill: #1793dc; }
.marker path { fill: url(#pinfill); stroke: #b9302b; stroke-width: .7; }
.marker circle { fill: #5b0e0b; }
.google { font: 600 20.500px "Open Sans", sans-serif; paint-order: stroke; stroke: #fff; stroke-width: 2px; }
.b { fill: #4285f4; }
.r { fill: #ea4335; }
.y { fill: #fbbc05; }
.g { fill: #34a853; }
.controls { position: absolute; right: 10px; bottom: 24px; display: flex; flex-direction: column; gap: 10px; }
.pegman, .zoom { width: 28px; background: #fff; border-radius: 2px; box-shadow: 0 1px 3px rgba(0,0,0,.3); }
.pegman { height: 28px; display: flex; align-items: center; justify-content: center; }
.pegman svg { width: 12px; height: 20px; fill: #f9b52d; stroke: #d88f16; stroke-width: .5; }
.pegman .tie { fill: #ed6a32; stroke: none; }
.pegman .leg { stroke: #b67710; stroke-width: 1; }
.zoom { height: 55px; display: flex; flex-direction: column; align-items: center; }
.zoom button { width: 28px; height: 27px; display: grid; place-items: center; }
.zoom hr { width: 19px; height: 1px; border: 0; margin: 0; background: #e0e0e0; }
.bar { grid-area: 1 / 1; width: 11px; height: 3px; background: #666; }
.upright { transform: rotate(90deg); }
.credits { position: absolute; right: 0; bottom: 0; height: 14px; display: flex; font: 10px/14px Roboto, sans-serif; color: #444; }
.credits span { background: rgba(245,245,245,.7); padding: 0 6px; white-space: nowrap; }
.credits span + span { border-left: 1px solid #ddd; padding: 0 6px 0 5px; }
.credits span:nth-child(2) { padding-right: 7px; }
.credits span:first-child { padding-left: 12px; }
.footer { flex: none; display: flex; flex-wrap: wrap; padding-left: 71px; height: 233px; box-sizing: border-box; color: #2c3e50; align-content: flex-start; padding-top: 9px; }
.footer section { display: flex; flex-direction: column; height: 210px; }
.footer a { color: #1abc9c; }
.products { width: 292.500px; }
.connect { width: 390px; }
.about { width: 457.500px; }
h4 { font-size: 19px; line-height: 21px; height: 21px; font-weight: 400; margin: 0 0 10px; letter-spacing: -.05px; }
h4 small { font-size: 14.250px; line-height: 1; color: #b4bcc2; letter-spacing: -.1px; }
.brand { letter-spacing: .22px; }
.contact { display: flex; flex-direction: column; margin-top: 11px; }
.contact span { display: flex; align-items: center; }
.contact svg { fill: #2c3e50; margin-right: 3px; }
.tel { font-weight: 400; letter-spacing: -.2px; }
.phone { width: 12px; height: 12px; }
.mail { width: 15px; height: 12px; }
.social { display: flex; gap: 7px; margin-top: 26px; }
.social svg { width: 27.500px; height: 27.500px; fill: #1abc9c; }
.social .gplus { margin-left: -1px; }
.gplus ellipse, .gplus path { fill: none; stroke: #f9f9f9; stroke-width: 1.700; }
.about p { margin: 0 0 11px; }
.tight { letter-spacing: -.1px; }
.snug { letter-spacing: -.06px; }
.langs { display: flex; gap: 13px; margin-top: 5px; }
.langs svg { width: 13px; height: 13px; fill: #1abc9c; margin-right: 3px; vertical-align: -1px; }
.copyright { width: 100%; color: #b4bcc2; letter-spacing: .08px; }
.callout { position: absolute; left: 340px; top: 465px; }
.callout rect { fill: none; stroke: #f00; stroke-width: 4; }
.callout .shaft { stroke: #f00; stroke-width: 3.500; }
.callout .head { fill: #f00; stroke: #f00; }
.callout text { font: bold 21px "Liberation Sans", Arial, sans-serif; fill: #f00; paint-order: stroke; stroke: #f9f9f9; stroke-width: 5px; }
</style>
